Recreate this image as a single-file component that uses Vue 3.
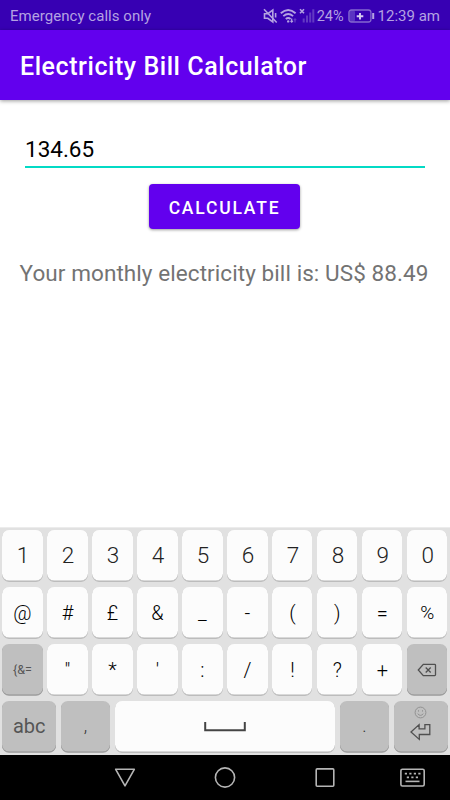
<template>
  <div class="screen">
    <header class="status-bar">
      <span class="carrier">Emergency calls only</span>
      <div class="status-icons">
        <svg class="mute" width="15" height="16" viewBox="0 0 15 16">
          <path d="M1.5 5.7h3.3l5-3.7v12L4.8 10.3H1.5z" />
          <path d="M1 1.2l12.7 13.3M12.6 5v4.5" />
        </svg>
        <svg class="wifi" width="18" height="16" viewBox="0 0 18 16">
          <path d="M.8 5.2q7.4-6.6 14.8 0M3.3 8.1q4.9-4.2 9.8 0M5.8 10.9q2.4-2 4.8 0" />
          <circle cx="8.2" cy="13.4" r="1.2" />
          <path class="thin" d="M11.7 10.5v3.6M10.5 12.8l1.2 1.4 1.2-1.4" />
          <path class="thin faint" d="M15 14.5v-3.6M13.8 12.2l1.2-1.4 1.2 1.4" />
        </svg>
        <svg class="signal" width="16" height="16" viewBox="0 0 16 16">
          <path class="cross" d="M1 1.2l4 4M5 1.2l-4 4" />
          <path class="bars" d="M4.7 14.5v-4M8 14.5V7.5M11.2 14.5V4.5M14.3 14.5V1.3" />
        </svg>
        <span class="percent">24%</span>
        <svg class="battery" width="27" height="14" viewBox="0 0 27 14">
          <rect class="level" x="1" y="1" width="6" height="12" rx="2" />
          <rect class="case" x=".9" y="1" width="22" height="12" rx="2.5" />
          <path class="plus" d="M12 3.9v6.6M8.7 7.2h6.6" />
          <path class="tip" d="M25.2 4v6" />
        </svg>
        <span class="clock">12:39 am</span>
      </div>
    </header>

    <div class="app-bar">
      <h1>Electricity Bill Calculator</h1>
    </div>

    <main class="content">
      <input v-model="units" class="units" type="text" />
      <button class="calculate" @click="calculate">CALCULATE</button>
      <p class="result">Your monthly electricity bill is: US$ {{ bill }}</p>
    </main>

    <section class="keyboard">
      <div v-for="(row, i) in rows" :key="i" class="row">
        <button
          v-for="key in row"
          :key="key"
          class="key"
          :class="{ number: i === 0, dark: key === '{&=' || key === 'del', small: key === '{&=', pct: key === '%' }"
          @click="press(key)"
        >
          <svg v-if="key === 'del'" width="20" height="14" viewBox="0 0 20 14">
            <path class="stroke" d="M1.3 7L6.3 1.4h11.4q.8 0 .8.8v9.6q0 .8-.8.8H6.3z" />
            <path class="stroke" d="M8.7 4.5l5 5M13.7 4.5l-5 5" />
          </svg>
          <span v-else>{{ key }}</span>
        </button>
      </div>
      <div class="row bottom">
        <button class="key dark abc"><span>abc</span></button>
        <button class="key dark comma"><span>,</span></button>
        <button class="key">
          <svg class="space-icon" width="42" height="10" viewBox="0 0 42 10">
            <path d="M1.2 0v8.2h39.6V0" />
          </svg>
        </button>
        <button class="key dark dot" @click="press('.')"><span>.</span></button>
        <button class="key dark enter">
          <svg class="smiley" width="13" height="13" viewBox="0 0 13 13">
            <circle cx="6.5" cy="6.5" r="5.4" />
            <path d="M4.5 4.2v1.4M8.5 4.2v1.4M3.7 7.7q2.8 3.4 5.6 0" />
          </svg>
          <svg width="21" height="18" viewBox="0 0 21 18">
            <path class="stroke" d="M1 9L9.1 1.6v4.2h5.8V1.7h4.9v9.8H9.3v4.9z" />
          </svg>
        </button>
      </div>
    </section>

    <nav class="nav-bar">
      <svg width="100" height="45" viewBox="0 0 100 45">
        <path d="M40.7 14.3h18.6L50 30.8z" />
      </svg>
      <svg width="100" height="45" viewBox="0 0 100 45">
        <circle cx="50" cy="22.5" r="9.6" />
      </svg>
      <svg width="100" height="45" viewBox="0 0 100 45">
        <rect x="41.2" y="13.9" width="17.6" height="17.3" rx="1" />
      </svg>
      <svg width="75" height="45" viewBox="0 0 75 45">
        <rect x="25.9" y="14.2" width="23.3" height="16.8" rx="1.5" />
        <path class="keys" d="M29.8 18.7h16M31.8 22.3h12" />
        <path d="M30.5 26.4h14" />
      </svg>
    </nav>
  </div>
</template>

<script setup>
import { ref } from 'vue'

const units = ref('134.65')
const bill = ref('88.49')

const rows = [
  ['1', '2', '3', '4', '5', '6', '7', '8', '9', '0'],
  ['@', '#', '£', '&', '_', '-', '(', ')', '=', '%'],
  ['{&=', '"', '*', "'", ':', '/', '!', '?', '+', 'del'],
]

const RATE = 0.6572

function calculate() {
  const n = parseFloat(units.value)
  bill.value = isNaN(n) ? '0.00' : (n * RATE).toFixed(2)
}

function press(key) {
  if (key === 'del') {
    units.value = units.value.slice(0, -1)
  } else if (/^[0-9.]$/.test(key)) {
    units.value += key
  }
}
</script>

<style>
body { margin: 0; background: #fff; }
</style>

<style scoped>
.screen {
  width: 450px;
  height: 800px;
  display: flex;
  flex-direction: column;
  overflow: hidden;
  background: #fff;
  font-family: Roboto, "Liberation Sans", sans-serif;
}
button { border: 0; padding: 0; font-family: inherit; }
svg { display: block; fill: none; flex: none; }

.status-bar {
  height: 30px;
  flex: none;
  box-sizing: border-box;
  padding: 1px 10px 0;
  display: flex;
  align-items: center;
  justify-content: space-between;
  background: #3700b3;
  color: #b4a2e2;
  font-size: 15px;
}
.carrier { letter-spacing: 0.04px; }
.status-icons { display: flex; align-items: center; }
.status-icons svg { stroke: #b4a2e2; }
.mute { stroke-width: 1.6; margin-right: 2px; }
.wifi { stroke-width: 1.9; margin-right: 1px; }
.wifi circle { fill: #b4a2e2; stroke: none; }
.wifi .thin { stroke-width: 1.2; }
.faint, .signal .bars { opacity: 0.35; }
.signal { stroke-width: 2; margin-right: 2px; }
.cross { stroke-width: 1.6; }
.percent { font-size: 14.5px; padding-top: 1px; margin-right: 4px; }
.status-icons .battery { margin-right: 3px; }
.battery .level { fill: #5a33c2; stroke: none; }
.battery .case { stroke: #8468cf; stroke-width: 1.3; }
.battery .plus { stroke: #d6ccf0; stroke-width: 1.9; }
.battery .tip { stroke-width: 2; }

.app-bar {
  height: 70px;
  flex: none;
  box-sizing: border-box;
  padding: 3px 20px 0;
  display: flex;
  align-items: center;
  background: #6200ee;
  box-shadow: 0 1px 4px rgba(0, 0, 0, 0.4);
}
h1 {
  margin: 0;
  color: #fff;
  font-size: 25px;
  font-weight: 500;
  letter-spacing: 0.56px;
}

.content {
  flex: 1;
  display: flex;
  flex-direction: column;
  align-items: center;
}
.units {
  width: 400px;
  height: 38px;
  margin-top: 30px;
  box-sizing: border-box;
  padding: 2px 0 0;
  border: 0;
  border-bottom: 2px solid #03dac5;
  outline: 0;
  background: transparent;
  color: #000;
  font-family: inherit;
  font-size: 22.5px;
}
.calculate {
  width: 151px;
  height: 45px;
  margin: 16px 1px 0 0;
  padding: 2px 0 0;
  border-radius: 4px;
  background: #6200ee;
  box-shadow: 0 1px 3px rgba(0, 0, 0, 0.4);
  color: #fff;
  font-size: 17.5px;
  font-weight: 500;
  letter-spacing: 1.8px;
}
.result {
  margin: 31px 0 0;
  padding-right: 2px;
  color: #737373;
  font-size: 22.5px;
  line-height: 27px;
  letter-spacing: 0.08px;
  white-space: nowrap;
}

.keyboard {
  height: 228px;
  flex: none;
  box-sizing: border-box;
  padding: 2px 2.4px 0;
  border-top: 1px solid #ececec;
  background: #e1e1e1;
  display: flex;
  flex-direction: column;
  gap: 6px;
}
.row { display: grid; grid-template-columns: repeat(10, 40.2px); gap: 4.8px; }
.bottom { grid-template-columns: 53.7px 49px 220.4px 49px 53.9px; }
.key {
  height: 51px;
  display: flex;
  align-items: center;
  justify-content: center;
  border-radius: 7px;
  background: #fcfcfc;
  box-shadow: inset 0 -0.5px 0 #b5b5b5, 0 0.7px 0 #b0b0b0;
  color: #000;
  font-size: 20px;
  font-weight: 300;
}
.number { padding: 0 0 1px 1px; color: #222; font-size: 22.5px; }
.pct { font-size: 19px; }
.dark { background: #bfbfbf; box-shadow: inset 0 -0.5px 0 #919191, 0 0.7px 0 #999; color: #555; font-weight: 400; }
.small { font-size: 12.5px; }
.abc { font-size: 20px; padding-bottom: 2px; }
.comma, .dot { font-size: 18px; font-weight: 300; color: #333; padding-bottom: 2px; }
.stroke { stroke: #505050; stroke-width: 1.3; }
.space-icon { stroke: #444; stroke-width: 2; }
.enter { flex-direction: column; gap: 4px; padding-bottom: 6px; }
.smiley { stroke: #929292; stroke-width: 1; }

.nav-bar {
  height: 45px;
  flex: none;
  padding-left: 75px;
  display: flex;
  background: #000;
}
.nav-bar svg { stroke: #b5b5b5; stroke-width: 1.6; stroke-linejoin: round; }
.nav-bar .keys { stroke-width: 1.8; stroke-dasharray: 2.2 2.3; }
</style>
